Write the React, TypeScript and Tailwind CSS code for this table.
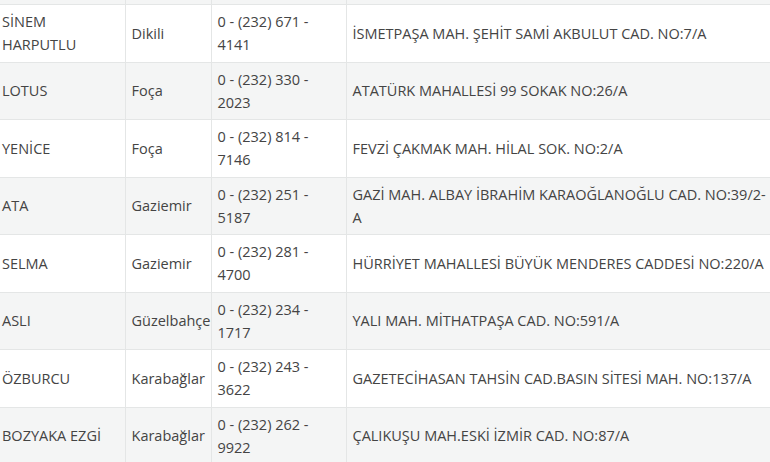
const rows = [
  { name: 'SİNEM HARPUTLU', district: 'Dikili', phone: '0 - (232) 671 - 4141', address: 'İSMETPAŞA MAH. ŞEHİT SAMİ AKBULUT CAD. NO:7/A' },
  { name: 'LOTUS', district: 'Foça', phone: '0 - (232) 330 - 2023', address: 'ATATÜRK MAHALLESİ 99 SOKAK NO:26/A' },
  { name: 'YENİCE', district: 'Foça', phone: '0 - (232) 814 - 7146', address: 'FEVZİ ÇAKMAK MAH. HİLAL SOK. NO:2/A' },
  { name: 'ATA', district: 'Gaziemir', phone: '0 - (232) 251 - 5187', address: 'GAZİ MAH. ALBAY İBRAHİM KARAOĞLANOĞLU CAD. NO:39/2-A' },
  { name: 'SELMA', district: 'Gaziemir', phone: '0 - (232) 281 - 4700', address: 'HÜRRİYET MAHALLESİ BÜYÜK MENDERES CADDESİ NO:220/A' },
  { name: 'ASLI', district: 'Güzelbahçe', phone: '0 - (232) 234 - 1717', address: 'YALI MAH. MİTHATPAŞA CAD. NO:591/A' },
  { name: 'ÖZBURCU', district: 'Karabağlar', phone: '0 - (232) 243 - 3622', address: 'GAZETECİHASAN TAHSİN CAD.BASIN SİTESİ MAH. NO:137/A' },
  { name: 'BOZYAKA EZGİ', district: 'Karabağlar', phone: '0 - (232) 262 - 9922', address: 'ÇALIKUŞU MAH.ESKİ İZMİR CAD. NO:87/A' },
];

const cell = 'border-r border-b border-[#e4e6e6] pl-[6px] py-[5.25px] align-middle';

export default function App() {
  return (
    <div className="w-[770px] h-[462px] overflow-hidden bg-white">
      <table
        className="-ml-[4px] table-fixed border-collapse text-[14.5px] leading-[23px] text-[#444]"
        style={{ fontFamily: '"Open Sans", "Noto Sans", sans-serif', width: 790 }}
      >
        <colgroup>
          <col className="w-[129px]" />
          <col className="w-[86px]" />
          <col className="w-[135px]" />
          <col className="w-[440px]" />
        </colgroup>
        <tbody>
          <tr className="bg-[#f4f5f5] h-[4.5px]">
            <td className="border-r border-b border-[#e4e6e6]" />
            <td className="border-r border-b border-[#e4e6e6]" />
            <td className="border-r border-b border-[#e4e6e6]" />
            <td className="border-b border-[#e4e6e6]" />
          </tr>
          {rows.map((r, i) => (
            <tr key={r.name} className={i % 2 === 0 ? 'bg-white' : 'bg-[#f4f5f5]'}>
              <td className={cell + ' pr-[8px]'}>{r.name}</td>
              <td className={cell + ' pr-[1px]'}>{r.district}</td>
              <td className={cell + ' pr-[2px]'}>{r.phone}</td>
              <td className={cell + ' pr-[16px]'}>{r.address}</td>
            </tr>
          ))}
        </tbody>
      </table>
    </div>
  );
}
